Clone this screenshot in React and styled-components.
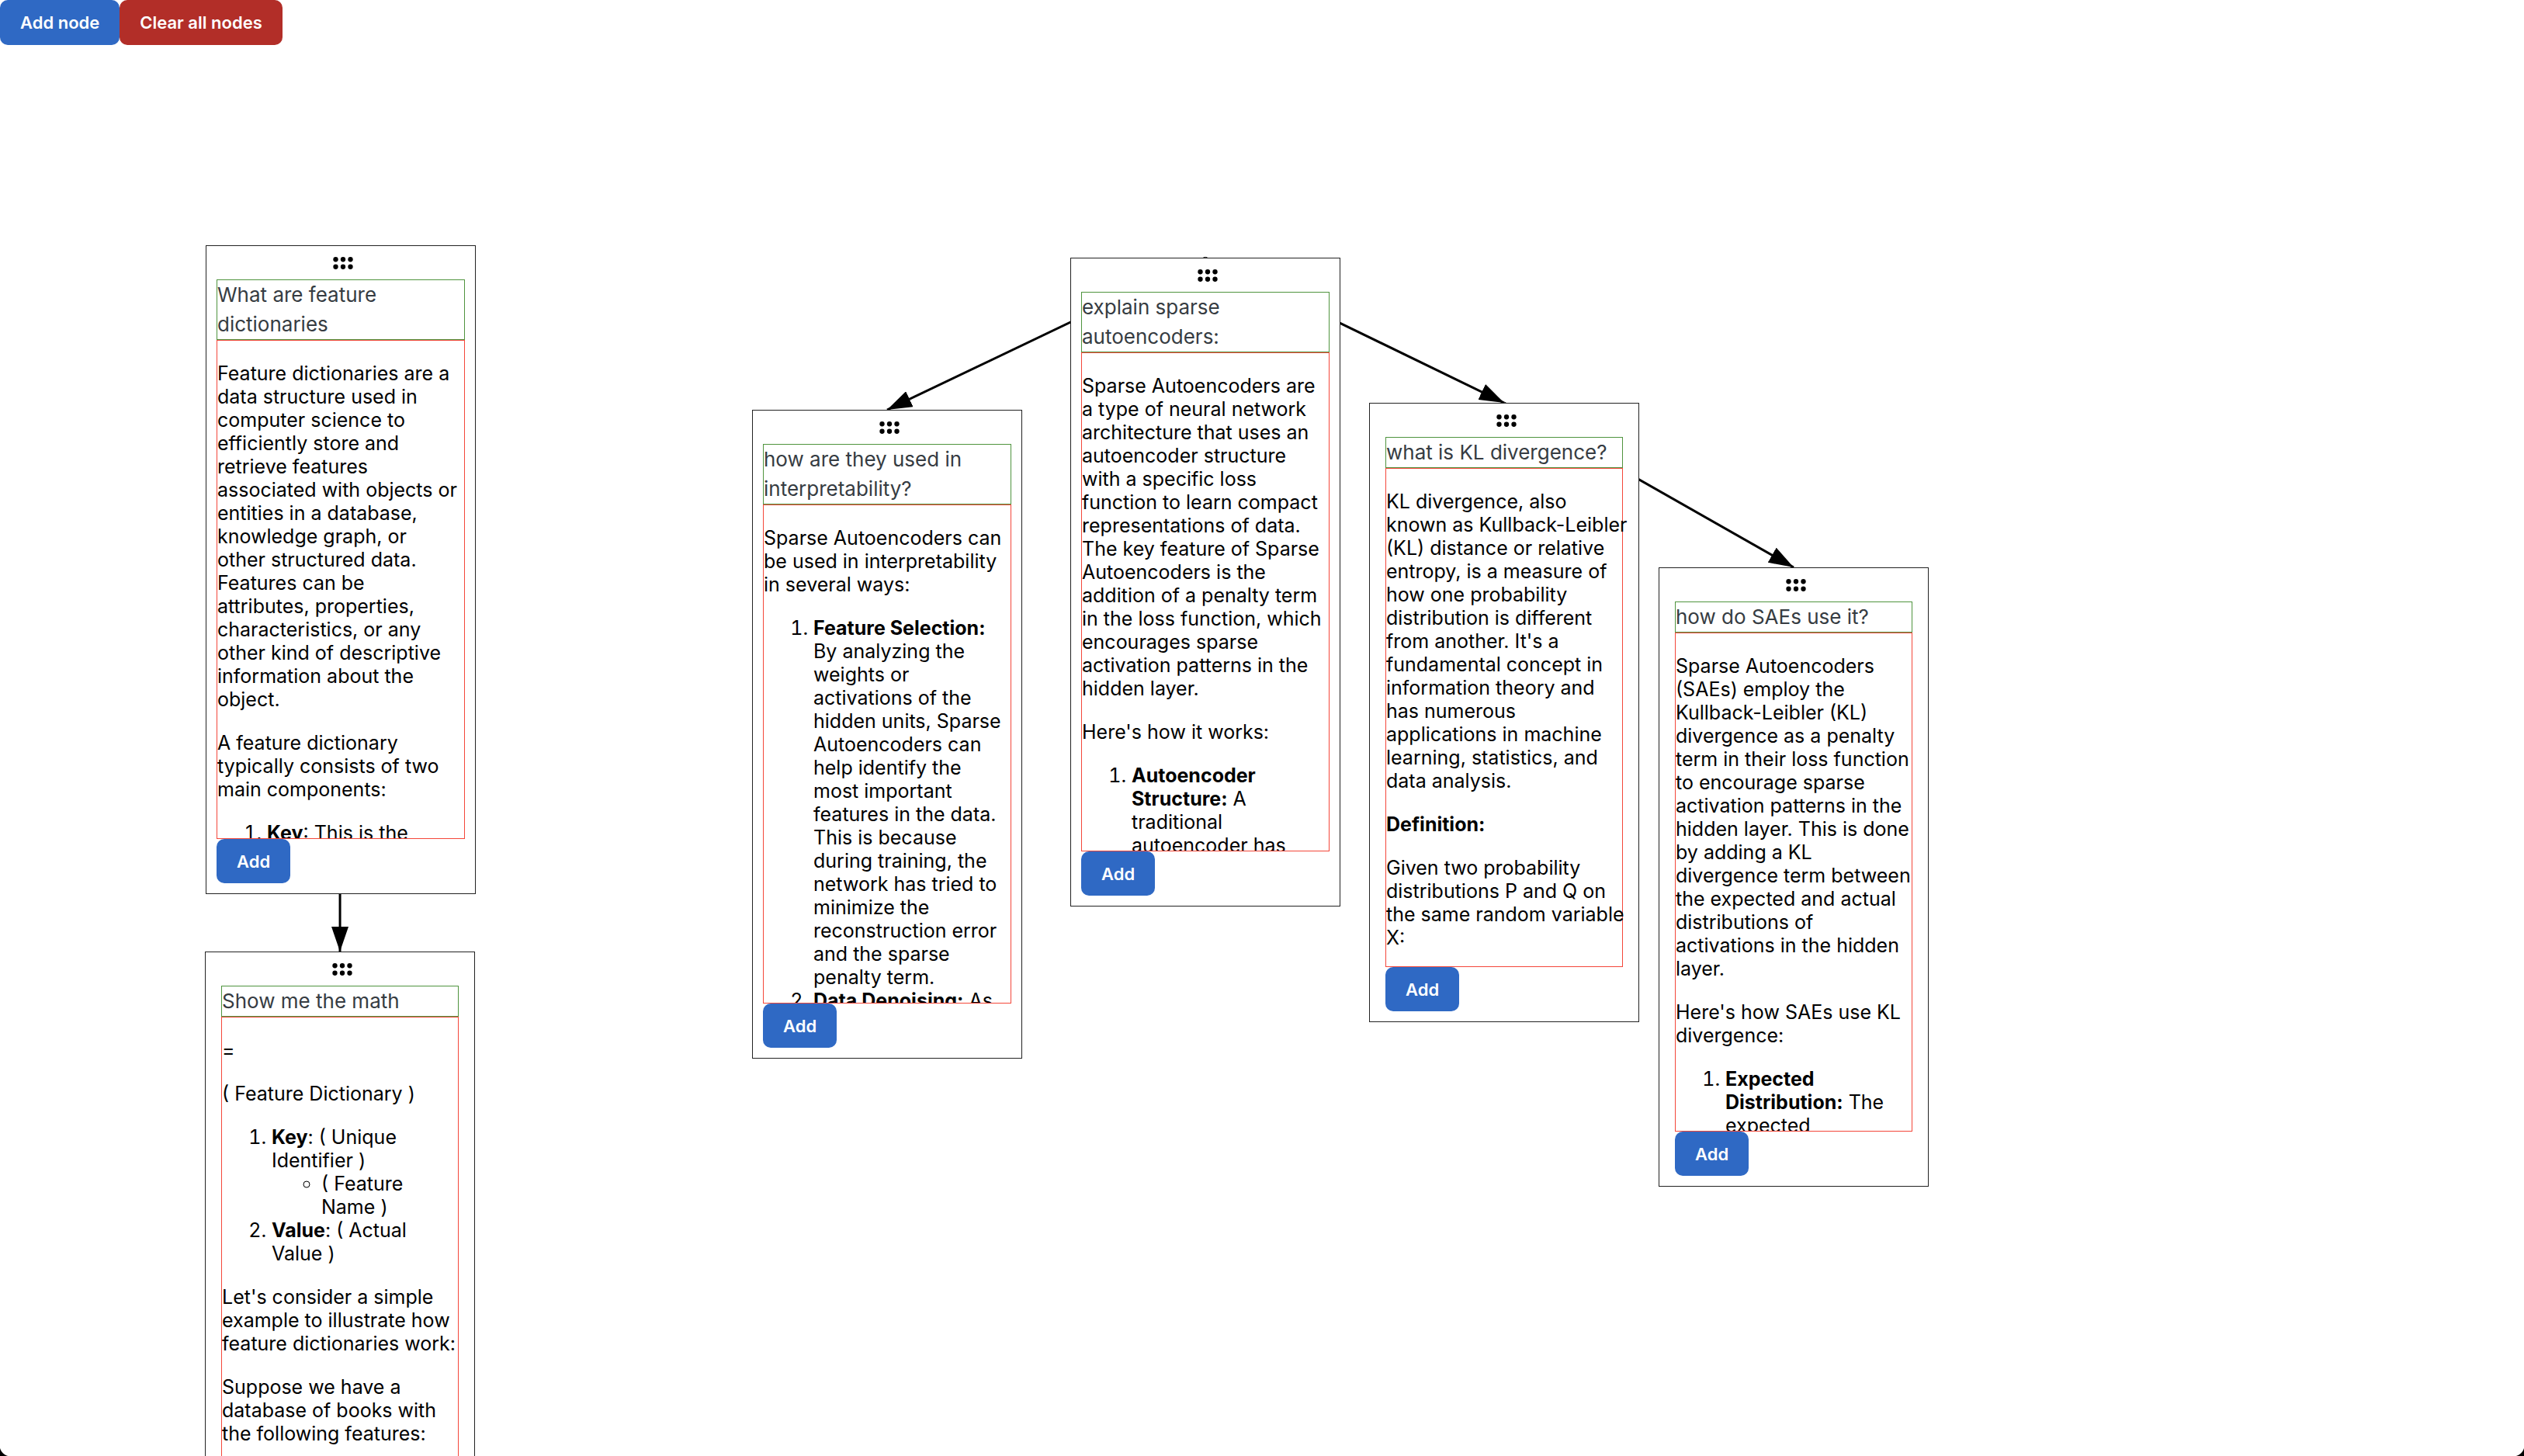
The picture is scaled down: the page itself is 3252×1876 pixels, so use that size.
import React from "react";
import styled, { createGlobalStyle } from "styled-components";

const GlobalStyle = createGlobalStyle`
  * { box-sizing: border-box; }
  body {
    margin: 0;
    background: #fff;
    color: #000;
    font-family: Inter, "Liberation Sans", sans-serif;
    font-size: 25px;
    line-height: 30px;
  }
`;

// The two gradients draw the rounded lower corners of the window.
const Page = styled.main`
  display: flex;
  flex-direction: column;
  height: 100vh;
  overflow: hidden;
  background:
    radial-gradient(circle at 100% 0, transparent 14px, #000 15px) left bottom / 14px 14px no-repeat,
    radial-gradient(circle at 0 0, transparent 14px, #000 15px) right bottom / 14px 14px no-repeat,
    #fff;
`;

const Toolbar = styled.div`
  display: flex;
`;

const Button = styled.button`
  align-self: flex-start;
  height: ${(p) => (p.$small ? 57 : 58)}px;
  padding: 0 26px;
  border: 0;
  border-radius: 10px;
  background: ${(p) => (p.$danger ? "#b22e28" : "#2f69c4")};
  color: #fff;
  font: 600 22px/30px Inter, "Liberation Sans", sans-serif;
  cursor: pointer;
`;

const Canvas = styled.div`
  position: relative;
  flex: 1;
`;

const Edges = styled.svg`
  position: absolute;
  inset: 0;
  width: 100%;
  height: 100%;
  overflow: visible;
`;

const Card = styled.article`
  position: absolute;
  left: ${(p) => p.$x}px;
  top: ${(p) => p.$y}px;
  display: flex;
  flex-direction: column;
  width: 348px;
  padding: 0 ${(p) => (p.$inset ? 20 : 13)}px 13px;
  border: 1px solid #222;
  background: #fff;
`;

const Handle = styled.button`
  display: flex;
  justify-content: center;
  padding: 3px 0 2px 5px;
  border: 0;
  background: none;
  color: #000;
  cursor: grab;
`;

const Prompt = styled.h2`
  margin: 0;
  border: 1px solid #4f943e;
  color: #363c42;
  font-size: 26px;
  font-weight: 400;
  line-height: 38px;
`;

const Answer = styled.div`
  height: 643px;
  overflow-x: visible;
  overflow-y: clip;
  border: 1px solid #f4473a;

  p, & > ol { margin: 26px 0; }
  p:first-child { margin-top: 27px; }
  ol, ul { padding-left: 64px; }
  ul { margin: 0; }
  strong { font-weight: 700; }
`;

const Phrase = styled.span`
  white-space: nowrap;
`;

const DragIcon = () => (
  <svg width="38" height="38" viewBox="0 0 24 24" fill="currentColor" aria-hidden="true">
    {[9, 15].map((y) => [6, 12, 18].map((x) => <circle key={`${x}-${y}`} cx={x} cy={y} r="2" />))}
  </svg>
);

// Card positions are measured from the canvas, which starts below the toolbar.
const nodes = [
  {
    id: "dict", x: 265, y: 258, title: "What are feature dictionaries",
    body: (
      <>
        <p>
          Feature dictionaries are a data structure used in computer science to efficiently store and
          retrieve features associated with objects or entities in a database, knowledge graph, or<br />
          other structured data.<br />
          Features can be<br />
          attributes, properties,<br />
          characteristics, or any<br />
          other kind of descriptive<br />
          information about the<br />
          object.
        </p>
        <p>A feature dictionary typically consists of two main components:</p>
        <ol>
          <li><strong>Key</strong>: This is the</li>
        </ol>
      </>
    ),
  },
  {
    id: "math", x: 264, y: 1168, inset: true, title: "Show me the math",
    body: (
      <>
        <p>=</p>
        <p>( Feature Dictionary )</p>
        <ol>
          <li>
            <strong>Key</strong>: ( Unique Identifier )
            <ul><li>( Feature Name )</li></ul>
          </li>
          <li><strong>Value</strong>: ( Actual Value )</li>
        </ol>
        <p>Let's consider a simple example to illustrate how feature dictionaries work:</p>
        <p>Suppose we have a database of books with the following features:</p>
      </>
    ),
  },
  {
    id: "interp", x: 969, y: 470, title: "how are they used in interpretability?",
    body: (
      <>
        <p>Sparse Autoencoders can be used in interpretability in several ways:</p>
        <ol>
          <li>
            <strong>Feature Selection:</strong> By analyzing the weights or activations of the hidden
            units, Sparse Autoencoders can help identify the most important features in the data. This is
            because during training, the network has tried to minimize the reconstruction error and the
            sparse penalty term.
          </li>
          <li><strong>Data Denoising:</strong> As</li>
        </ol>
      </>
    ),
  },
  {
    id: "sparse", x: 1379, y: 274, title: "explain sparse autoencoders:",
    body: (
      <>
        <p>
          Sparse Autoencoders are a type of neural network architecture that uses an autoencoder structure
          with a specific loss function to learn compact representations of data. The key feature of Sparse
          Autoencoders is the addition of a penalty term in the loss function, which encourages sparse
          activation patterns in the hidden layer.
        </p>
        <p>Here's how it works:</p>
        <ol>
          <li><strong>Autoencoder Structure:</strong> A traditional autoencoder has</li>
        </ol>
      </>
    ),
  },
  {
    id: "kl", x: 1764, y: 461, inset: true, title: "what is KL divergence?",
    body: (
      <>
        <p>
          KL divergence, also<br />
          <Phrase>known as Kullback-Leibler</Phrase><br />
          (KL) distance or relative<br />
          entropy, is a measure of<br />
          how one probability<br />
          distribution is different<br />
          from another. It's a<br />
          fundamental concept in<br />
          information theory and<br />
          has numerous<br />
          applications in machine learning, statistics, and data analysis.
        </p>
        <p><strong>Definition:</strong></p>
        <p>
          Given two probability distributions P and Q on<br />
          <Phrase>the same random variable</Phrase><br />
          X:
        </p>
      </>
    ),
  },
  {
    id: "saes", x: 2137, y: 673, inset: true, title: "how do SAEs use it?",
    body: (
      <>
        <p>
          Sparse Autoencoders (SAEs) employ the Kullback-Leibler (KL) divergence as a penalty term in their
          loss function to encourage sparse activation patterns in the hidden layer. This is done by adding
          a KL divergence term between the expected and actual distributions of activations in the hidden
          layer.
        </p>
        <p>Here's how SAEs use KL divergence:</p>
        <ol>
          <li><strong>Expected Distribution:</strong> The expected</li>
        </ol>
      </>
    ),
  },
];

const links = [["dict", "math"], ["sparse", "interp"], ["sparse", "kl"], ["kl", "saes"]];

const topCentre = (id) => {
  const n = nodes.find((node) => node.id === id);
  return [n.x + 174, n.y];
};

function Edge({ from, to }) {
  const [x1, y1] = topCentre(from);
  const [x2, y2] = topCentre(to);
  return <line x1={x1} y1={y1} x2={x2} y2={y2} stroke="#000" strokeWidth="3" markerEnd="url(#arrow)" />;
}

export default function App() {
  return (
    <Page>
      <GlobalStyle />
      <Toolbar>
        <Button type="button">Add node</Button>
        <Button type="button" $danger>Clear all nodes</Button>
      </Toolbar>
      <Canvas>
        <Edges aria-hidden="true">
          <defs>
            <marker id="arrow" markerUnits="userSpaceOnUse" markerWidth="32" markerHeight="22" refX="32" refY="11" orient="auto">
              <path d="M0 0L32 11L0 22Z" />
            </marker>
          </defs>
          {links.map(([from, to]) => <Edge key={to} from={from} to={to} />)}
        </Edges>
        {nodes.map((n) => (
          <Card key={n.id} $x={n.x} $y={n.y} $inset={n.inset}>
            <Handle type="button" aria-label="Drag node"><DragIcon /></Handle>
            <Prompt>{n.title}</Prompt>
            <Answer>{n.body}</Answer>
            <Button type="button" $small>Add</Button>
          </Card>
        ))}
      </Canvas>
    </Page>
  );
}
